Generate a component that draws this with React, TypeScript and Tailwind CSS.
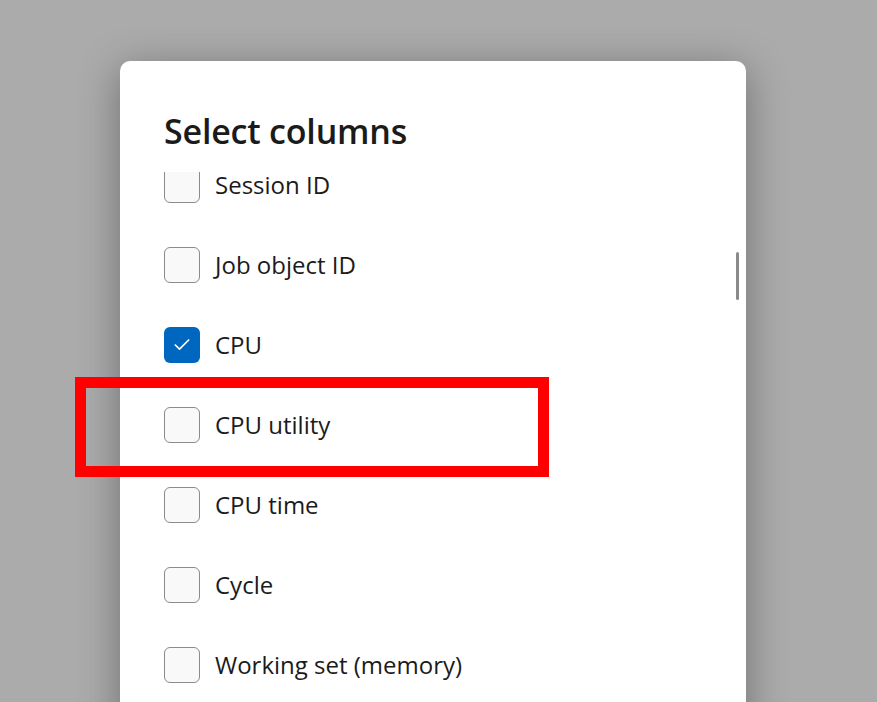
import { Check } from "lucide-react";

const columns = [
  { label: "Session ID", checked: false },
  { label: "Job object ID", checked: false },
  { label: "CPU", checked: true },
  { label: "CPU utility", checked: false },
  { label: "CPU time", checked: false },
  { label: "Cycle", checked: false },
  { label: "Working set (memory)", checked: false },
];

function Checkbox({ checked }: { checked: boolean }) {
  if (checked) {
    return (
      <div className="flex h-[36px] w-[36px] shrink-0 items-center justify-center rounded-[6px] bg-[#0067c0]">
        <Check className="h-[20px] w-[20px] text-white" strokeWidth={2} />
      </div>
    );
  }
  return (
    <div className="h-[36px] w-[36px] shrink-0 rounded-[6px] border-[1.5px] border-[#8c8c8c] bg-[#f9f9f9]" />
  );
}

export default function App() {
  return (
    <div
      className="relative h-[702px] w-[877px] overflow-hidden bg-[#ababab]"
      style={{ fontFamily: '"Open Sans", "Noto Sans", sans-serif' }}
    >
      <div className="absolute left-[120px] top-[61px] h-[700px] w-[626px] rounded-[10px] bg-white shadow-[0_8px_40px_rgba(0,0,0,0.35)]">
        <div className="flex h-full flex-col">
          <div className="px-[44px] pt-[48px] pb-[19px]">
            <h1 className="text-[34px] font-semibold leading-[44px] tracking-[-0.2px] text-[#1b1b1b]">
              Select columns
            </h1>
          </div>
          <div className="relative flex-1 overflow-hidden">
            <div className="-mt-[27px] flex flex-col px-[44px]">
              {columns.map((c) => (
                <div key={c.label} className="flex h-[80px] items-center gap-[15px]">
                  <Checkbox checked={c.checked} />
                  <span className="text-[24px] leading-[20px] text-[#1b1b1b]">{c.label}</span>
                </div>
              ))}
            </div>
            <div className="absolute right-[7px] top-[80px] h-[48px] w-[3px] rounded-full bg-[#8a8a8a]" />
          </div>
        </div>
      </div>
      <div className="absolute left-[75px] top-[377px] h-[100px] w-[474px] border-[11px] border-[#ff0000]" />
    </div>
  );
}
